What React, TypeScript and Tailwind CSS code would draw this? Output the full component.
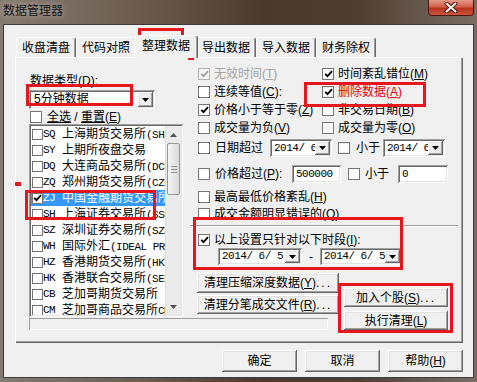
import React from 'react';

const SUNKEN =
  'shadow-[inset_1px_1px_0_#a0a0a0,inset_-1px_-1px_0_#ffffff,inset_2px_2px_0_#696969,inset_-2px_-2px_0_#e3e3e3]';
const RAISED =
  'shadow-[inset_-1px_-1px_0_#696969,inset_1px_1px_0_#ffffff,inset_-2px_-2px_0_#a0a0a0,inset_2px_2px_0_#e3e3e3]';
const MONO = "font-['Liberation_Mono',monospace] text-[11px] tracking-[-0.5px]";

const tabs = ['收盘清盘', '代码对照', '整理数据', '导出数据', '导入数据', '财务除权'];

const exchanges: [string, string, string][] = [
  ['SQ', '上海期货交易所', '(SHFE)'],
  ['SY', '上期所夜盘交易', ''],
  ['DQ', '大连商品交易所', '(DCE)'],
  ['ZQ', '郑州期货交易所', '(CZCE)'],
  ['ZJ', '中国金融期货交易所', ''],
  ['SH', '上海证券交易所', '(SSE)'],
  ['SZ', '深圳证券交易所', '(SZSE)'],
  ['WH', '国际外汇', '(IDEAL PRO)'],
  ['HZ', '香港期货交易所', '(HKFE)'],
  ['HK', '香港联合交易所', '(SEHK)'],
  ['CB', '芝加哥期货交易所', ' (CBOT)'],
  ['CM', '芝加哥商品交易所', 'CME'],
];

function Box({ on, off, small }: { on?: boolean; off?: boolean; small?: boolean }) {
  return (
    <span
      className={`shrink-0 flex items-center justify-center border ${small ? 'w-[11px] h-[11px]' : 'w-[12px] h-[12px]'} ${
        off ? 'border-[#b4b4b4] bg-[#f6f6f6]' : 'border-[#767676] bg-white'
      }`}
    >
      {on && (
        <svg width="9" height="8" viewBox="0 0 9 8">
          <path d="M1.2 3.8l2.3 2.4L8 1.2" fill="none" stroke={off ? '#a3a3a3' : '#000'} strokeWidth="1.9" />
        </svg>
      )}
    </span>
  );
}

// checkbox + caption; caption kept in one span so mnemonic <u> doesn't split it
function Opt({
  on,
  off,
  className,
  text,
  k,
  tail = '',
}: {
  on?: boolean;
  off?: boolean;
  className: string;
  text: string;
  k: string;
  tail?: string;
}) {
  return (
    <span className={`flex items-center ${className}`}>
      <Box on={on} off={off} />
      <span className="ml-[4px] whitespace-nowrap">
        {text}(<u>{k}</u>){tail}
      </span>
    </span>
  );
}

function Drop() {
  return (
    <span className={`w-[15px] h-full shrink-0 flex items-center justify-center bg-[#f0f0f0] ${RAISED}`}>
      <svg width="7" height="4" viewBox="0 0 7 4">
        <path d="M0 0h7L3.5 4z" fill="#000" />
      </svg>
    </span>
  );
}

function Arrow({ up }: { up?: boolean }) {
  return (
    <div className="h-[17px] shrink-0 flex items-center justify-center">
      <svg width="7" height="4" viewBox="0 0 7 4">
        <path d={up ? 'M0 4h7L3.5 0z' : 'M0 0h7L3.5 4z'} fill="#505050" />
      </svg>
    </div>
  );
}

function Btn({ children, className }: { children: React.ReactNode; className: string }) {
  return (
    <div className={`flex items-center justify-center bg-[#f0f0f0] whitespace-nowrap ${RAISED} ${className}`}>
      <span>{children}</span>
    </div>
  );
}

export default function App() {
  return (
    <div className="relative w-[477px] h-[382px] overflow-hidden flex flex-col text-[12px] leading-[14px] text-black font-['Liberation_Sans','Noto_Sans_CJK_SC',sans-serif] bg-[linear-gradient(90deg,#867b72_0%,#6b5b4e_30%,#4b392d_55%,#4f3e32_75%,#7b6d63_100%)]">
      {/* title bar */}
      <div className="h-[24px] shrink-0 flex items-start">
        <span className="ml-[3px] mt-[4px] text-[#111] [text-shadow:0_0_6px_rgba(255,255,255,0.6)]">数据管理器</span>
        <div className="ml-auto mr-[3px] w-[46px] h-[16px] rounded-b-[4px] border border-t-0 border-[#4e150e] bg-[linear-gradient(180deg,#e39a88_0%,#d2604a_45%,#b8321e_55%,#c9573c_100%)] flex items-center justify-center">
          <svg width="14" height="11" viewBox="0 0 14 11">
            <path d="M2.5 1.5l9 8M11.5 1.5l-9 8" stroke="#4a140d" strokeWidth="4" strokeLinecap="round" />
            <path d="M2.5 1.5l9 8M11.5 1.5l-9 8" stroke="#fff" strokeWidth="2" strokeLinecap="round" />
          </svg>
        </div>
      </div>

      {/* client area */}
      <div className="mx-[3px] h-[354px] border border-[#3c3c3c] bg-[#f0f0f0] flex flex-col">
        {/* tabs */}
        <div className="h-[32px] shrink-0 flex items-end pl-[12px]">
          {tabs.map((t, i) =>
            i === 2 ? (
              <div
                key={t}
                className="relative z-10 -mx-[2px] -mb-px w-[64px] h-[23px] bg-[#f0f0f0] rounded-t-[3px] border-t border-l border-white border-r border-r-[#696969] shadow-[inset_-1px_0_0_#a0a0a0] flex items-center justify-center pb-[2px]"
              >
                {t}
              </div>
            ) : (
              <div
                key={t}
                className="w-[60px] h-[20px] rounded-t-[3px] border-t border-l border-white border-r border-r-[#696969] shadow-[inset_-1px_0_0_#a0a0a0] flex items-center justify-center"
              >
                {t}
              </div>
            )
          )}
        </div>

        {/* tab panel */}
        <div className="ml-[11px] w-[448px] h-[286px] shrink-0 flex pl-[14px] pt-[8px] shadow-[inset_1px_1px_0_#ffffff,inset_-1px_-1px_0_#696969,inset_-2px_-2px_0_#a0a0a0]">
          {/* left column */}
          <div className="w-[154px] shrink-0 flex flex-col pt-[8px]">
            <div className="h-[17px] leading-[17px] pl-[1px]">
              数据类型(<u>D</u>):
            </div>
            <div className={`w-[126px] h-[19px] bg-white p-[2px] flex ${SUNKEN}`}>
              <span className="flex-1 pl-[3px] leading-[15px]">5分钟数据</span>
              <Drop />
            </div>
            <div className="mt-[1px] h-[14px] flex items-center pl-[1px]">
              <Box />
              <span className="ml-[5px] whitespace-nowrap">
                <u>全选</u> / <u>重置</u>(<u>E</u>)
              </span>
            </div>
            <div className={`h-[193px] w-[154px] bg-white p-[2px] flex ${SUNKEN}`}>
              <div className="flex-1 min-w-0 flex flex-col overflow-hidden">
                {exchanges.map(([code, name, suffix]) => {
                  const sel = code === 'ZJ';
                  return (
                    <div
                      key={code}
                      className={`h-[16px] shrink-0 flex items-center whitespace-nowrap ${sel ? 'bg-[#3399ff] text-white' : ''}`}
                    >
                      <span className="ml-[1px] shrink-0">
                        <Box small on={sel} />
                      </span>
                      <span className={`${MONO} w-[19px] shrink-0`}>{code}</span>
                      <span className="shrink-0">
                        {name}
                        <span className={`${MONO} whitespace-pre`}>{suffix}</span>
                      </span>
                    </div>
                  );
                })}
              </div>
              <div className="w-[16px] shrink-0 flex flex-col bg-[#ebebeb] border-l border-[#dedede]">
                <Arrow up />
                <div className="mx-[1px] h-[52px] shrink-0 rounded-[2px] border border-[#979797] bg-[linear-gradient(90deg,#f5f5f5,#dadada)] flex flex-col items-center justify-center gap-[2px]">
                  <span className="w-[6px] h-px bg-[#8c8c8c]" />
                  <span className="w-[6px] h-px bg-[#8c8c8c]" />
                  <span className="w-[6px] h-px bg-[#8c8c8c]" />
                </div>
                <div className="flex-1" />
                <Arrow />
              </div>
            </div>
            <div className="mt-[1px] h-[12px] w-[299px] shrink-0 shadow-[inset_1px_1px_0_#a0a0a0,inset_-1px_-1px_0_#ffffff]" />
          </div>

          {/* right column */}
          <div className="ml-[14px] w-[262px] shrink-0 flex flex-col">
            <div className="h-[18px] flex items-center pl-[1px]">
              <Opt on off className="w-[124px] text-[#a3a3a3]" text="无效时间" k="T" />
              <Opt on className="" text="时间紊乱错位" k="M" />
            </div>
            <div className="h-[18px] flex items-center pl-[1px]">
              <Opt className="w-[124px]" text="连续等值" k="C" tail=":" />
              <Opt on className="text-[#e80000]" text="删除数据" k="A" />
            </div>
            <div className="h-[18px] flex items-center pl-[1px]">
              <Opt on className="w-[124px]" text="价格小于等于零" k="Z" />
              <Opt className="" text="非交易日期" k="B" />
            </div>
            <div className="h-[18px] flex items-center pl-[1px]">
              <Opt className="w-[124px]" text="成交量为负" k="V" />
              <Opt className="" text="成交量为零" k="O" />
            </div>

            <div className="mt-[2px] h-[18px] flex items-center pl-[1px]">
              <Box />
              <span className="ml-[5px] w-[55px]">日期超过</span>
              <div className={`w-[62px] h-[18px] bg-white p-[2px] flex ${SUNKEN}`}>
                <span className={`${MONO} flex-1 pl-[2px] leading-[14px] whitespace-pre overflow-hidden`}>2014/ 6</span>
                <Drop />
              </div>
              <span className="ml-[6px]">
                <Box />
              </span>
              <span className="ml-[6px] w-[27px]">小于</span>
              <div className={`w-[62px] h-[18px] bg-white p-[2px] flex ${SUNKEN}`}>
                <span className={`${MONO} flex-1 pl-[2px] leading-[14px] whitespace-pre overflow-hidden`}>2014/ 6</span>
                <Drop />
              </div>
            </div>

            <div className="mt-[8px] h-[18px] flex items-center pl-[1px]">
              <Box />
              <span className="ml-[5px] w-[77px] whitespace-nowrap">
                价格超过(<u>P</u>):
              </span>
              <div className={`w-[49px] h-[18px] bg-white px-[4px] flex items-center ${SUNKEN}`}>
                <span className={MONO}>500000</span>
              </div>
              <span className="ml-[7px]">
                <Box />
              </span>
              <span className="ml-[5px] w-[33px]">小于</span>
              <div className={`w-[50px] h-[18px] bg-white px-[4px] flex items-center ${SUNKEN}`}>
                <span className={MONO}>0</span>
              </div>
            </div>

            <div className="mt-[5px] h-[17px] flex items-center pl-[1px]">
              <Opt className="" text="最高最低价格紊乱" k="H" />
            </div>
            <div className="h-[17px] flex items-center pl-[1px]">
              <Opt className="" text="成交金额明显错误的" k="Q" />
            </div>

            <div className="mt-[3px] -ml-[7px] w-[268px] h-[2px] border-t border-[#a0a0a0] border-b border-b-white" />

            <div className="mt-[4px] h-[17px] flex items-center pl-[1px]">
              <Opt on className="" text="以上设置只针对以下时段" k="I" tail=":" />
            </div>
            <div className="h-[17px] flex items-center pl-[21px]">
              <div className={`w-[84px] h-[17px] bg-white p-[2px] flex ${SUNKEN}`}>
                <span className={`${MONO} flex-1 pl-[2px] leading-[13px] whitespace-pre`}>2014/ 6/ 5</span>
                <Drop />
              </div>
              <span className="w-[18px] text-center">-</span>
              <div className={`w-[82px] h-[17px] bg-white p-[2px] flex ${SUNKEN}`}>
                <span className={`${MONO} flex-1 pl-[2px] leading-[13px] whitespace-pre`}>2014/ 6/ 5</span>
                <Drop />
              </div>
            </div>

            <div className="mt-[8px] flex">
              <div className="w-[142px] shrink-0 flex flex-col gap-[2px]">
                <Btn className="h-[20px]">
                  清理压缩深度数据(<u>Y</u>)<span className="tracking-[2px]">...</span>
                </Btn>
                <Btn className="h-[19px]">
                  清理分笔成交文件(<u>R</u>)<span className="tracking-[2px]">...</span>
                </Btn>
              </div>
              <div className="ml-[5px] mt-[15px] w-[104px] shrink-0 flex flex-col gap-[4px]">
                <Btn className="h-[19px]">
                  加入个股(<u>S</u>)<span className="tracking-[2px]">...</span>
                </Btn>
                <Btn className="h-[19px]">
                  执行清理(<u>L</u>)
                </Btn>
              </div>
            </div>
          </div>
        </div>

        {/* dialog buttons */}
        <div className="mt-[7px] flex justify-end gap-[8px] pr-[10px]">
          <Btn className="w-[75px] h-[22px]">确定</Btn>
          <Btn className="w-[75px] h-[22px]">取消</Btn>
          <Btn className="w-[75px] h-[22px]">
            帮助(<u>H</u>)
          </Btn>
        </div>
      </div>

      {/* red annotation marks */}
      <div className="pointer-events-none absolute left-[138px] top-[28px] w-[46px] h-[29px] border-[3px] border-[#e5161c]" />
      <div className="pointer-events-none absolute left-[26px] top-[84px] w-[107px] h-[22px] border-[3px] border-[#e5161c]" />
      <div className="pointer-events-none absolute left-[304px] top-[82px] w-[122px] h-[25px] border-[3px] border-[#e5161c]" />
      <div className="pointer-events-none absolute left-[25px] top-[190px] w-[131px] h-[30px] border-[3px] border-[#e5161c]" />
      <div className="pointer-events-none absolute left-[193px] top-[217px] w-[210px] h-[53px] border-[3px] border-[#e5161c]" />
      <div className="pointer-events-none absolute left-[338px] top-[283px] w-[115px] h-[50px] border-[3px] border-[#e5161c]" />
      <div className="pointer-events-none absolute left-[15px] top-[182px] w-[6px] h-[4px] bg-[#e5161c]" />
      <div className="pointer-events-none absolute left-[188px] top-[57px] w-[6px] h-[3px] bg-[#e5161c]" />
    </div>
  );
}
